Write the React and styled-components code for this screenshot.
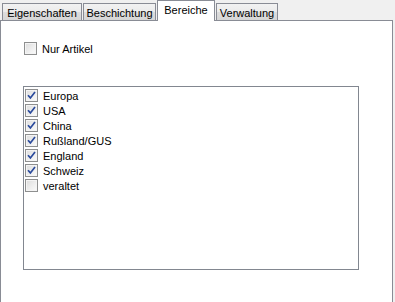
import React from 'react'
import styled, { createGlobalStyle } from 'styled-components'

const GlobalStyle = createGlobalStyle`
    html, body {
        margin: 0;
        padding: 0;
        background: #f0f0f0;
        font-family: "Liberation Sans", Arial, sans-serif;
        font-size: 11px;
        color: #000;
    }
`

const Window = styled.div`
    width: 395px;
    height: 302px;
    overflow: hidden;
    display: flex;
    flex-direction: column;
`

const TabStrip = styled.div`
    display: flex;
    align-items: flex-end;
    gap: 1px;
    height: 20px;
    padding-left: 2px;
    position: relative;
    z-index: 1;
`

const Tab = styled.div`
    box-sizing: border-box;
    width: ${p => p.$w}px;
    height: ${p => (p.$active ? 21 : 17)}px;
    margin-bottom: ${p => (p.$active ? -1 : 0)}px;
    border: 1px solid #898c95;
    border-bottom: none;
    background: ${p =>
        p.$active ? '#ffffff' : 'linear-gradient(#f2f2f2 0%, #ebebeb 50%, #dddddd 51%, #d6d6d6 100%)'};
    display: flex;
    align-items: center;
    justify-content: center;
    padding-top: ${p => (p.$active ? 0 : 1)}px;
    padding-bottom: ${p => (p.$active ? 3 : 0)}px;
    white-space: nowrap;
`

const Panel = styled.div`
    box-sizing: border-box;
    width: 393px;
    flex: 1;
    background: #ffffff;
    border: 1px solid #898c95;
    border-bottom: none;
    padding: 21px 0 0 22px;
`

const CheckRow = styled.label`
    display: flex;
    align-items: center;
    gap: ${p => p.$gap}px;
    height: ${p => p.$h}px;
    padding-left: ${p => p.$indent}px;
    white-space: nowrap;
`

const Box = styled.span`
    box-sizing: border-box;
    width: 13px;
    height: 13px;
    flex: none;
    border: 1px solid #8e8f8f;
    background: linear-gradient(135deg, #dcdcdc 0%, #eeeeee 55%, #fbfbfb 100%);
    box-shadow: inset 0 0 0 1px #f4f4f4;
    display: flex;
    align-items: center;
    justify-content: center;
`

const ListBox = styled.div`
    box-sizing: border-box;
    width: 336px;
    height: 184px;
    margin-top: 31px;
    border: 1px solid #828790;
    background: #ffffff;
    padding: 1px 0 0 0;
    display: flex;
    flex-direction: column;
`

const Check = () => (
    <svg width="9" height="9" viewBox="0 0 9 9">
        <path d="M1 4.2 L3.4 6.9 L8 1" fill="none" stroke="#2a4a9c" strokeWidth="1.7" />
    </svg>
)

const CheckBox = ({ checked }) => <Box>{checked && <Check />}</Box>

const tabs = [
    { label: 'Eigenschaften', w: 80 },
    { label: 'Beschichtung', w: 73 },
    { label: 'Bereiche', w: 58, active: true },
    { label: 'Verwaltung', w: 62 },
]

const regions = [
    { label: 'Europa', checked: true },
    { label: 'USA', checked: true },
    { label: 'China', checked: true },
    { label: 'Rußland/GUS', checked: true },
    { label: 'England', checked: true },
    { label: 'Schweiz', checked: true },
    { label: 'veraltet', checked: false },
]

export default function App() {
    return (
        <Window>
            <GlobalStyle />
            <TabStrip>
                {tabs.map(t => (
                    <Tab key={t.label} $w={t.w} $active={t.active}>
                        {t.label}
                    </Tab>
                ))}
            </TabStrip>
            <Panel>
                <CheckRow $gap={5} $h={13} $indent={1}>
                    <CheckBox checked={false} />
                    Nur Artikel
                </CheckRow>
                <ListBox>
                    {regions.map(r => (
                        <CheckRow key={r.label} $gap={5} $h={15} $indent={1}>
                            <CheckBox checked={r.checked} />
                            {r.label}
                        </CheckRow>
                    ))}
                </ListBox>
            </Panel>
        </Window>
    )
}
